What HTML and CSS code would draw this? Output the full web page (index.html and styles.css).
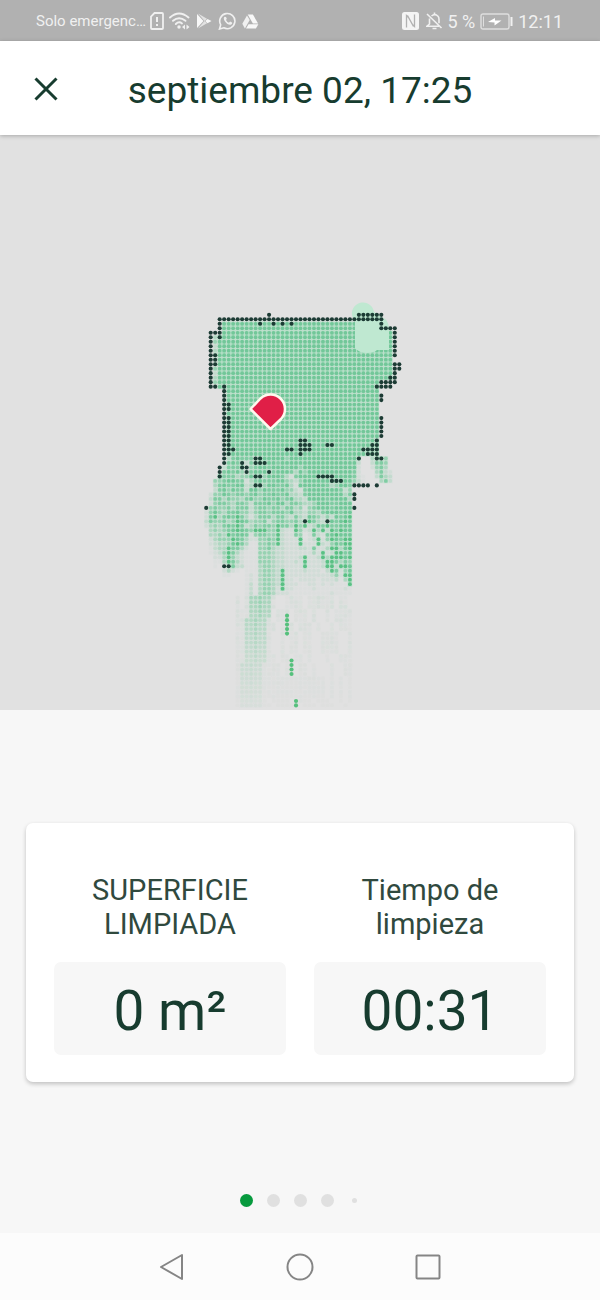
FILE: index.html
```html
<!DOCTYPE html>
<html lang="es">
  <head>
    <meta charset="UTF-8" />
    <meta name="viewport" content="width=device-width, initial-scale=1" />
    <title>septiembre 02, 17:25</title>
    <link rel="stylesheet" href="styles.css">
    <script src="map.js" defer></script>
  </head>
  <body>
    <!-- status bar -->
    <div class="status">
      <span class="carrier">Solo emergenc…</span>
      <svg class="icon sim" width="14" height="18" viewBox="0 0 14 18">
        <path d="M4.500 1H12a1 1 0 0 1 1 1v14a1 1 0 0 1-1 1H2a1 1 0 0 1-1-1V4.500z" fill="none" stroke="#f0f0f0" stroke-width="1.800" />
        <path d="M7 5v5M7 12v2" stroke="#f0f0f0" stroke-width="2" />
      </svg>
      <svg class="icon wifi" width="21" height="18" viewBox="0 0 21 18">
        <g fill="none" stroke="#f0f0f0" stroke-width="1.900" stroke-linecap="round">
          <path d="M1 5.500Q10 -2.500 19.500 5.500" />
          <path d="M4 8.800Q10 3.500 16.500 8.800" />
          <path d="M6.800 12Q10 9 13 11.500" />
        </g>
        <circle cx="10" cy="15" r="1.700" fill="#f0f0f0" />
        <path d="M16 12.500v5l-3-2.500zM17.500 12.500v5l3-2.500z" fill="#f0f0f0" />
      </svg>
      <svg class="icon play" width="16" height="16" viewBox="0 0 16 16">
        <path d="M1 1l6.500 7L1 15z" fill="#f8f8f8" />
        <path d="M2 .5l9 5.200L8.500 8zM2 15.500l9-5.200L8.500 8z" fill="#e2e2e2" />
        <path d="M11.500 6L15.500 8l-4 2.200L9.300 8z" fill="#f8f8f8" />
      </svg>
      <svg class="icon chat" width="19" height="18" viewBox="0 0 19 18">
        <path d="M1.500 17l1.200-4.200A7.600 7.600 0 1 1 5.800 15.800z" fill="none" stroke="#f0f0f0" stroke-width="1.600" />
        <path d="M6.800 4.800C5.300 5.500 5.500 7.500 7 9.500c1.800 2.500 4.500 4 6.200 3 1-.6 1.200-1.500.8-1.900l-1.800-1-1.300 1.200C9.700 10.300 8.600 9.200 8 8l.8-1.200-.8-1.900z" fill="#f0f0f0" />
      </svg>
      <svg class="icon drive" width="17" height="15" viewBox="0 0 17 15">
        <path d="M5.700.5h5.200l5.200 9h-5.200z" fill="#f8f8f8" />
        <path d="M5 1.500l2.700 4.600-4.800 8.300L.3 9.800z" fill="#f0f0f0" />
        <path d="M6.500 10.300h9.900l-2.500 4.200H4z" fill="#f8f8f8" />
      </svg>
      <span class="spacer"></span>
      <svg class="icon nfc" width="17" height="18" viewBox="0 0 17 18">
        <rect x="0" y="0" width="17" height="18" rx="2.500" fill="#f4f4f4" />
        <path d="M4.500 15.500V3.500l2 2 5 9M12.500 2.500v12l-2-2-5-9" fill="none" stroke="#b1b1b1" stroke-width="1.300" />
      </svg>
      <svg class="icon bell" width="17" height="18" viewBox="0 0 17 18">
        <g fill="none" stroke="#f0f0f0" stroke-width="1.600">
          <path d="M1 2l14.500 14M3.500 6.500v5.500L1 14.200h12M5.500 4Q9 1.200 12 4.200q1 1.200 1 3v4" />
          <path d="M8.500 3V.5M6.500 16.500h4" />
        </g>
      </svg>
      <span class="percent">5 %</span>
      <svg class="icon battery" width="33" height="17" viewBox="0 0 33 17">
        <rect x="1" y="1" width="28" height="15" rx="2" fill="none" stroke="#dedede" stroke-width="1.400" />
        <path d="M3.500 3.500v10" stroke="#dedede" />
        <path d="M8 9l7-4v2.500h6.500L14.500 12.500V9.500z" fill="#fff" />
        <path d="M31.500 4v9" stroke="#f0f0f0" stroke-width="2" />
      </svg>
      <span class="clock">12:11</span>
    </div>

    <!-- header -->
    <header class="header">
      <button class="close" type="button" aria-label="Cerrar">
        <svg width="24" height="24" viewBox="0 0 24 24">
          <path d="M1.500 1.500l21 21M22.500 1.500l-21 21" stroke="#173c2f" stroke-width="3" />
        </svg>
      </button>
      <h1 class="title">septiembre 02, 17:25</h1>
    </header>

    <!-- cleaning map, the cells are drawn by map.js -->
    <main class="main">
      <svg class="map" viewBox="0 0 600 575" role="img" aria-label="Mapa de limpieza">
        <g transform="translate(210.700 184.300) scale(4.490)">
          <g id="cells"></g>
        </g>
        <path d="M352 180a11 11 0 0 1 22-3l8 5c5 2 7 7 7 12v21h-12q-3 3-10 3-8 0-12-5v-28q-3-2-3-5z" fill="#bfe8d1" />
        <g transform="translate(210.700 184.300) scale(4.490)">
          <g id="walls" fill="#1c3b34"></g>
        </g>
        <path d="M250.500 274L260.500 263.500A14.500 14.500 0 0 1 281 284L270.500 294z" fill="#e01f47" stroke="#fff8ee" stroke-width="2.500" stroke-linejoin="round" />
      </svg>

      <section class="info">
        <div class="card">
          <div class="stat">
            <h2 class="label">SUPERFICIE LIMPIADA</h2>
            <p class="value">0 m²</p>
          </div>
          <div class="stat">
            <h2 class="label">Tiempo de limpieza</h2>
            <p class="value">00:31</p>
          </div>
        </div>
        <div class="dots">
          <span class="dot active"></span>
          <span class="dot"></span>
          <span class="dot"></span>
          <span class="dot"></span>
          <span class="dot small"></span>
        </div>
      </section>
    </main>

    <!-- system navigation -->
    <nav class="nav">
      <button type="button" aria-label="Atrás">
        <svg width="28" height="28" viewBox="0 0 28 28">
          <path d="M3 14L24 2v24z" />
        </svg>
      </button>
      <button type="button" aria-label="Inicio">
        <svg width="28" height="28" viewBox="0 0 28 28">
          <circle cx="14" cy="14" r="12.500" />
        </svg>
      </button>
      <button type="button" aria-label="Recientes">
        <svg width="28" height="28" viewBox="0 0 28 28">
          <rect x="2.500" y="2.500" width="23" height="23" rx="1" />
        </svg>
      </button>
    </nav>
  </body>
</html>
```
FILE: styles.css
```css
* {
  margin: 0;
  padding: 0;
  box-sizing: border-box;
}

body {
  display: flex;
  flex-direction: column;
  min-height: 100vh;
  background-color: #f7f7f7;
  color: #173c2f;
  font-family: Roboto, "Liberation Sans", sans-serif;
}

button {
  border: none;
  background: none;
  cursor: pointer;
}

svg {
  display: block;
}

/* status bar */
.status {
  display: flex;
  align-items: center;
  height: 41px;
  padding: 1px 37px 0 36px;
  background-color: #b1b1b1;
  color: #f0f0f0;
  white-space: nowrap;
}

.icon {
  flex: none;
  margin-left: 5px;
}

.carrier {
  font-size: 15px;
}

.sim {
  margin-left: 4px;
}

.play,
.chat {
  margin-left: 6px;
}

.spacer {
  flex: 1;
}

.bell {
  margin-left: 7px;
}

.percent {
  margin-left: 4px;
  font-size: 18px;
}

.clock {
  margin-left: 5px;
  font-size: 18px;
}

/* header */
.header {
  position: relative;
  display: grid;
  grid-template-columns: 60px 1fr 60px;
  align-items: center;
  height: 94px;
  padding: 2px 16px 0;
  background-color: #fff;
  box-shadow: 0 1px 4px rgba(0, 0, 0, 0.25);
}

.close {
  justify-self: center;
}

.title {
  padding-top: 2px;
  font-size: 37px;
  font-weight: 400;
  text-align: center;
}

/* map and info */
.main {
  flex: 1;
  display: flex;
  flex-direction: column;
}

.map {
  width: 100%;
  background-color: #e1e1e1;
}

.info {
  flex: 1;
  display: flex;
  flex-direction: column;
  justify-content: space-between;
  padding: 113px 26px 26px;
}

.card {
  display: grid;
  grid-template-columns: 1fr 1fr;
  gap: 28px;
  padding: 50px 28px 27px;
  border-radius: 7px;
  background-color: #fff;
  box-shadow: 0 2px 4px rgba(0, 0, 0, 0.22);
}

.stat {
  text-align: center;
}

.label {
  padding: 0 30px;
  color: #30493e;
  font-size: 29px;
  font-weight: 400;
  line-height: 34px;
}

.value {
  margin-top: 21px;
  padding-top: 6px;
  border-radius: 7px;
  background-color: #f7f7f7;
  font-size: 55px;
  line-height: 87px;
}

.dots {
  display: flex;
  justify-content: center;
  align-items: center;
  gap: 14px;
}

.dot {
  width: 13px;
  height: 13px;
  border-radius: 50%;
  background-color: #e0e0e0;
}

.dot.active {
  background-color: #079a3e;
}

.dot.small {
  width: 5px;
  height: 5px;
  margin: 0 4px;
}

/* system navigation */
.nav {
  display: flex;
  justify-content: center;
  align-items: center;
  gap: 100px;
  height: 67px;
  background-color: #fcfcfc;
}

.nav svg {
  fill: none;
  stroke: #858585;
  stroke-width: 2;
  stroke-linejoin: round;
}
```
FILE: map.js
```javascript
var NS = "http://www.w3.org/2000/svg";
var cells = document.getElementById("cells");
var walls = document.getElementById("walls");

// walls: row -> [first column, last column] pairs
var wallRows = {
  "-1": [[13, 13], [33, 38]],
  0: [[2, 38]],
  1: [[2, 2], [11, 11], [14, 14], [16, 16], [18, 18], [38, 38]],
  2: [[2, 2], [38, 41]],
  3: [[0, 2], [41, 41]],
  4: [[0, 0], [2, 2], [41, 41]],
  5: [[0, 0], [41, 41]],
  6: [[0, 0], [41, 41]],
  7: [[0, 0], [41, 41]],
  8: [[0, 1], [41, 41]],
  9: [[0, 1]],
  10: [[0, 1], [41, 42]],
  11: [[0, 0], [41, 42]],
  12: [[0, 0], [41, 41]],
  13: [[0, 0], [40, 41]],
  14: [[0, 0], [38, 41]],
  15: [[0, 1], [3, 3], [37, 40]],
  16: [[3, 3]],
  17: [[3, 3], [38, 38]],
  18: [[3, 3], [38, 38]],
  19: [[3, 4]],
  20: [[3, 4]],
  21: [[3, 3]],
  22: [[3, 4], [38, 38]],
  23: [[3, 4], [38, 38]],
  24: [[3, 4], [38, 38]],
  25: [[3, 4], [38, 38]],
  26: [[3, 4], [38, 38]],
  27: [[3, 4], [20, 21], [37, 37]],
  28: [[3, 4], [20, 22], [26, 27], [36, 37]],
  29: [[3, 5], [17, 18], [20, 22], [34, 37]],
  30: [[3, 4], [20, 20], [35, 37]],
  31: [[3, 3], [10, 11], [33, 33], [37, 38]],
  32: [[3, 3], [7, 7], [10, 12]],
  33: [[2, 2], [7, 8]],
  34: [[2, 2], [8, 8], [13, 13]],
  35: [[2, 2], [10, 11], [24, 27]],
  36: [[27, 29]],
  37: [[10, 11], [32, 35], [37, 37]],
  39: [[32, 32]],
  40: [[32, 32]],
  42: [[-1, -1], [32, 32]],
  45: [[21, 21], [26, 26]],
  55: [[3, 4]]
};

// strength of the scan per cell, rows from 31 on
// columns -1..9, 10..20, 21..31 and 32..40
var scan = [
  [".....467666", "47777775777", "77777777777", "75..4665."],
  [".....676536", "66777677777", "77777777777", "73..3665."],
  ["....3666735", "67767776775", "77777777777", "72..2564."],
  ["....6767536", "77756777647", "57777777777", "62...4632"],
  ["...76664557", "76577764267", "77777777777", "621..3643"],
  ["..556776624", "67666775435", "77777777777", "531...463"],
  ["..467667734", "66577667427", "77777645776"],
  ["..367576637", "75766675532", "67777777635"],
  [".2557656656", "75667667443", "67777777746"],
  [".3664655467", "55766756744", "37777677774"],
  [".2566546653", "66675774665", "44577766777"],
  [".5655646663", "56656646645", "25677767777"],
  ["25754667553", "56656665744", "35546777677"],
  ["26846768642", "46664664364", "37653537678"],
  ["36556458764", "55635665564", "58643476787"],
  ["24546768634", "65665866485", "83476866777"],
  [".4545678765", "88855832285", "23848386877"],
  [".4454867762", "56655832265", "12632678777"],
  [".2455587642", "25565832228", "12382587688"],
  [".2344578641", "15565832228", "22283257688"],
  [".1344866421", "15564332223", "32622488478"],
  [".1235864211", "15554332222", "22428238867"],
  ["..224853211", "15554332223", "82238488878"],
  ["..114864211", "15554332232", "82223886465"],
  ["..1.2563311", "14554332222", "82223883887"],
  ["....2421.11", "14554382222", "32221386257"],
  ["....11...12", "14554382222", "22222235288"],
  [".........12", "14554382212", "22212223148"],
  [".........13", "14554382221", "12212121118"],
  [".........13", "14554282211", "11211111121"],
  [".........13", "14554222111", "11111121111"]
];

function draw(tag, attrs, parent) {
  var el = document.createElementNS(NS, tag);
  for (var name in attrs) {
    el.setAttribute(name, attrs[name]);
  }
  parent.appendChild(el);
}

// level goes from 0 (nothing) to 9 (strongest)
function drawCell(col, row, level) {
  var opacity = Math.min(1, (level * level) / 45);
  draw("rect", {
    x: col - 0.5,
    y: row - 0.5,
    width: 1,
    height: 1,
    fill: "#b0dec4",
    opacity: opacity
  }, cells);
  draw("circle", {
    cx: col,
    cy: row,
    r: 0.42,
    fill: level > 7 ? "#5ac084" : "#72c799",
    opacity: opacity
  }, cells);
}

// small repeatable noise
function noise(col, row) {
  var n = Math.sin(col * 12.9 + row * 4.1) * 43758.5;
  return n - Math.floor(n);
}

// the room itself
for (var row = 1; row <= 30; row++) {
  var from = row < 4 ? 3 : row < 16 ? 2 : 4;
  var to = row < 3 ? 37 : row < 14 ? 40 : 37;
  for (var col = from; col <= to; col++) {
    drawCell(col, row, 7);
  }
  if (row > 3 && row < 15) {
    drawCell(1, row, 3 + (row % 3));
  }
}

// partly scanned zone
scan.forEach(function (parts, i) {
  parts.join("").split("").forEach(function (ch, j) {
    if (ch !== ".") {
      drawCell(j - 1, i + 31, Number(ch));
    }
  });
});

// faint beams that fade out towards the bottom
for (row = 62; row <= 86; row++) {
  var fade = (87 - row) / 25;
  var shift = Math.round((row - 62) / 10);
  for (col = 6; col <= 31; col++) {
    var beam = col - (9 - shift);
    if (beam >= 0 && beam <= 4) {
      drawCell(col, row, 1.5 + (beam === 2 ? 3.5 : 2.8) * fade);
    } else if (noise(Math.round(col - row / 9), Math.floor(row / 5)) > 0.35) {
      drawCell(col, row, 0.8 + 1.2 * fade * noise(col, row));
    }
  }
}

// long reflections
[[17, 66, 70], [18, 76, 79], [19, 85, 86]].forEach(function (s) {
  for (var r = s[1]; r <= s[2]; r++) {
    draw("circle", { cx: s[0], cy: r, r: 0.46, fill: "#55c07c" }, cells);
  }
});

for (var key in wallRows) {
  wallRows[key].forEach(function (run) {
    for (var c = run[0]; c <= run[1]; c++) {
      draw("circle", { cx: c, cy: key, r: 0.46 }, walls);
    }
  });
}
```
